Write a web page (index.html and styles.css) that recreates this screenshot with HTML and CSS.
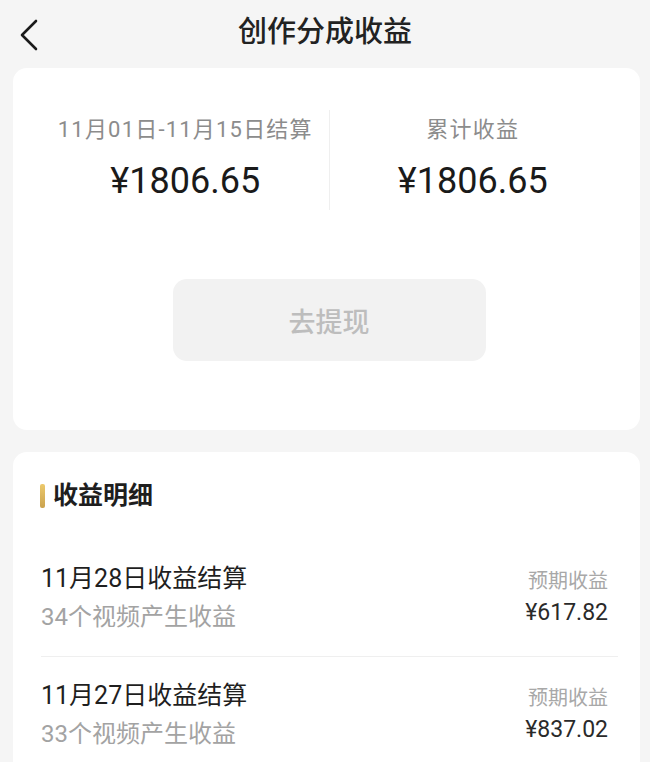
FILE: index.html
```html
<!DOCTYPE html>
<html lang="zh">
<head>
<meta charset="utf-8">
<title>创作分成收益</title>
<link rel="stylesheet" href="styles.css">
</head>
<body>
<header class="topbar">
  <div class="back">
    <svg width="20" height="32" viewBox="0 0 20 32"><path d="M17 2 L3 16 L17 30" fill="none" stroke="#1a1a1a" stroke-width="2.6" stroke-linecap="round" stroke-linejoin="round"/></svg>
  </div>
  <h1 class="title">创作分成收益</h1>
  <div></div>
</header>

<section class="card summary">
  <div class="stats">
    <div class="stat">
      <div class="stat-label">11月01日-11月15日结算</div>
      <div class="stat-value">¥1806.65</div>
    </div>
    <div class="vline"></div>
    <div class="stat">
      <div class="stat-label">累计收益</div>
      <div class="stat-value">¥1806.65</div>
    </div>
  </div>
  <div class="withdraw">去提现</div>
</section>

<section class="card detail">
  <h2 class="section-title"><span class="bar"></span>收益明细</h2>
  <div class="rows">
    <div class="row">
      <div class="row-left">
        <div class="row-title">11月28日收益结算</div>
        <div class="row-sub">34个视频产生收益</div>
      </div>
      <div class="row-right">
        <div class="row-label">预期收益</div>
        <div class="row-amount">¥617.82</div>
      </div>
    </div>
    <div class="row">
      <div class="row-left">
        <div class="row-title">11月27日收益结算</div>
        <div class="row-sub">33个视频产生收益</div>
      </div>
      <div class="row-right">
        <div class="row-label">预期收益</div>
        <div class="row-amount">¥837.02</div>
      </div>
    </div>
  </div>
</section>
</body>
</html>
```

FILE: styles.css
```css
* { box-sizing: border-box; }
html, body { margin: 0; padding: 0; }
body {
  background: #f5f5f5;
  font-family: Roboto, "Noto Sans CJK SC", sans-serif;
  color: #1e1e1e;
  overflow: hidden;
}
.topbar {
  height: 68px;
  display: grid;
  grid-template-columns: 60px 1fr 60px;
  align-items: center;
}
.back {
  padding-left: 19px;
  padding-top: 2px;
  display: flex;
  align-items: center;
}
.title {
  margin: 0;
  text-align: center;
  font-size: 29px;
  font-weight: 500;
  line-height: 36px;
  color: #222;
  padding-bottom: 4px;
}
.card {
  background: #fff;
  border-radius: 14px;
  margin: 0 10px 0 13px;
}
.summary {
  padding: 42px 24px 69px 29px;
}
.stats {
  display: flex;
  height: 100px;
}
.stat {
  flex: 1;
  display: flex;
  flex-direction: column;
  align-items: center;
  padding-top: 5px;
}
.vline {
  width: 1px;
  background: #efefef;
}
.stat-label {
  font-size: 22px;
  line-height: 30px;
  color: #8c8c8c;
  letter-spacing: 1.2px;
}
.stat-value {
  margin-top: 14px;
  font-size: 36px;
  line-height: 44px;
  color: #1a1a1a;
}
.withdraw {
  margin: 69px auto 0;
  width: 313px;
  height: 82px;
  border-radius: 14px;
  background: #f2f2f2;
  display: flex;
  align-items: center;
  justify-content: center;
  font-size: 27px;
  font-weight: 500;
  color: #bdbdbd;
}
.detail {
  margin-top: 22px;
  padding: 27px 22px 60px 27px;
}
.section-title {
  margin: 0;
  display: flex;
  align-items: center;
  font-size: 25px;
  line-height: 34px;
  font-weight: 700;
  color: #1e1e1e;
}
.bar {
  width: 5px;
  height: 24px;
  border-radius: 2px;
  background: linear-gradient(180deg, #ecc96c, #caa24e);
  margin-right: 8px;
}
.rows {
  margin-top: 27px;
  padding-left: 1px;
}
.row {
  display: flex;
  justify-content: space-between;
  padding: 22px 10px 23px 0;
  border-bottom: 1px solid #efefef;
}
.row:last-child { border-bottom: none; }
.row-title {
  font-size: 25px;
  line-height: 34px;
  color: #1f1f1f;
}
.row-sub {
  margin-top: 5px;
  font-size: 24px;
  line-height: 32px;
  color: #a3a3a3;
}
.row-right {
  display: flex;
  flex-direction: column;
  align-items: flex-end;
}
.row-label {
  margin-top: 5px;
  font-size: 20px;
  line-height: 28px;
  color: #a8a8a8;
}
.row-amount {
  margin-top: 3px;
  font-size: 23px;
  line-height: 30px;
  color: #2a2a2a;
}
```
